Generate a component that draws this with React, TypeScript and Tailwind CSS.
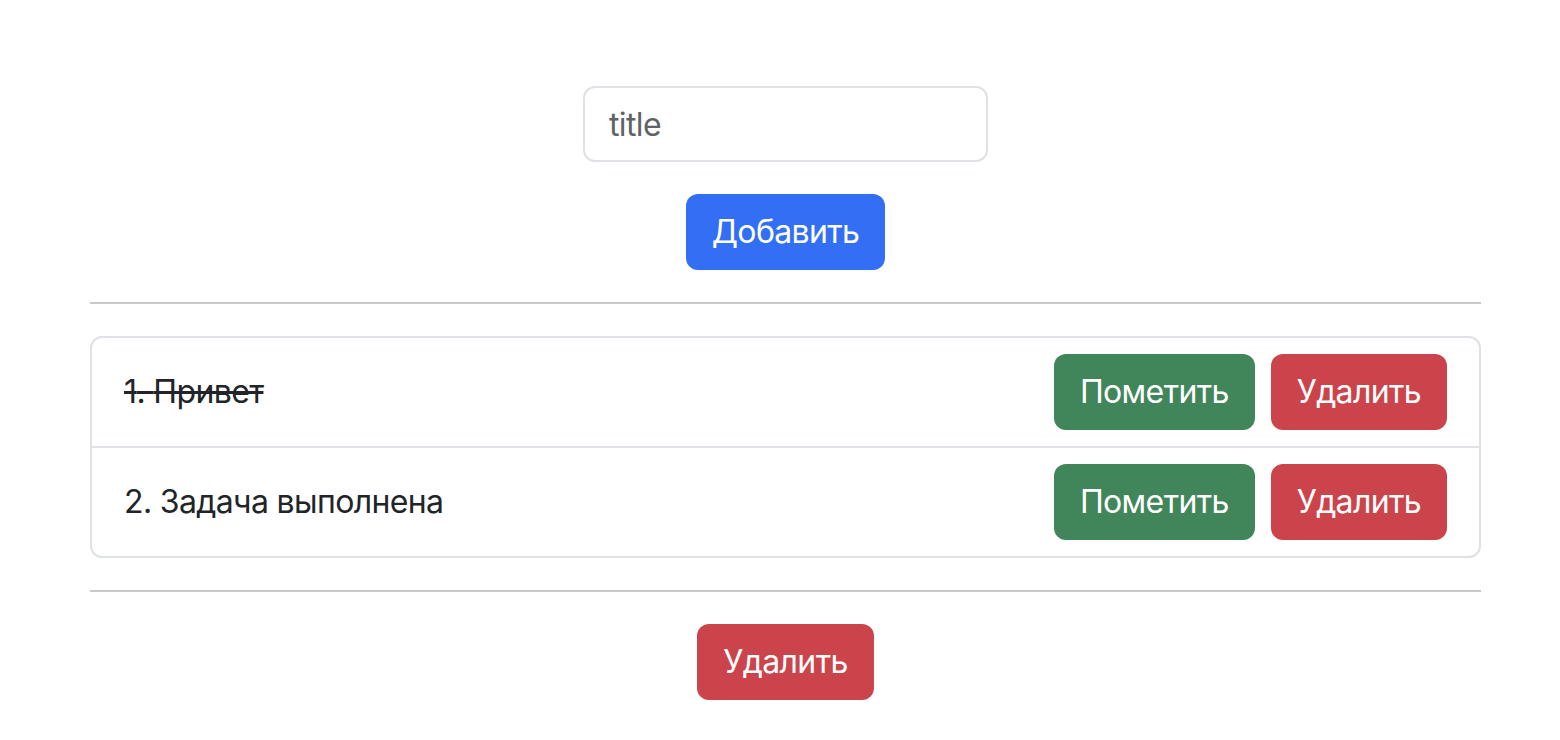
import React, { useState } from 'react';

type Todo = { id: number; title: string; done: boolean };

export default function App() {
  const [title, setTitle] = useState('');
  const [todos, setTodos] = useState<Todo[]>([
    { id: 1, title: 'Привет', done: true },
    { id: 2, title: 'Задача выполнена', done: false },
  ]);

  const add = () => {
    if (!title.trim()) return;
    setTodos([...todos, { id: Date.now(), title, done: false }]);
    setTitle('');
  };

  const btn = 'px-[24px] py-[12px] border-2 border-transparent rounded-[12px] text-white text-[32px] leading-[48px]';

  return (
    <div className="min-h-screen bg-white text-[#212529] font-['Inter','Noto_Sans',sans-serif] tracking-[-0.04em] pt-[86px]">
      <div className="ml-[90px] w-[1391px]">
        <div className="flex flex-col items-center gap-[32px]">
          <input
            value={title}
            onChange={(e) => setTitle(e.target.value)}
            placeholder="title"
            className="w-[405px] h-[76px] px-[24px] border-2 border-[#dee2e6] rounded-[12px] text-[32px] outline-none placeholder:text-[#5f6368]"
          />
          <button onClick={add} className={`${btn} bg-[#336ff5]`}>Добавить</button>
        </div>

        <hr className="my-[32px] border-t-2 border-[#c9c9c9]" />

        {/* Todo list */}
        <ul className="border-2 border-[#dee2e6] rounded-[12px]">
          {todos.map((t, i) => (
            <li
              key={t.id}
              className={`flex items-center justify-between px-[32px] py-[16px] ${i > 0 ? 'border-t-2 border-[#dee2e6]' : ''}`}
            >
              <span className={`text-[32px] leading-[48px] ${t.done ? 'line-through' : ''}`}>
                {i + 1}. {t.title}
              </span>
              <div className="flex gap-[16px]">
                <button
                  onClick={() => setTodos(todos.map((x) => (x.id === t.id ? { ...x, done: !x.done } : x)))}
                  className={`${btn} bg-[#41865a]`}
                >
                  Пометить
                </button>
                <button onClick={() => setTodos(todos.filter((x) => x.id !== t.id))} className={`${btn} bg-[#cb444b]`}>
                  Удалить
                </button>
              </div>
            </li>
          ))}
        </ul>

        <hr className="my-[32px] border-t-2 border-[#c9c9c9]" />

        <div className="flex justify-center">
          <button onClick={() => setTodos([])} className={`${btn} bg-[#cb444b]`}>Удалить</button>
        </div>
      </div>
    </div>
  );
}
